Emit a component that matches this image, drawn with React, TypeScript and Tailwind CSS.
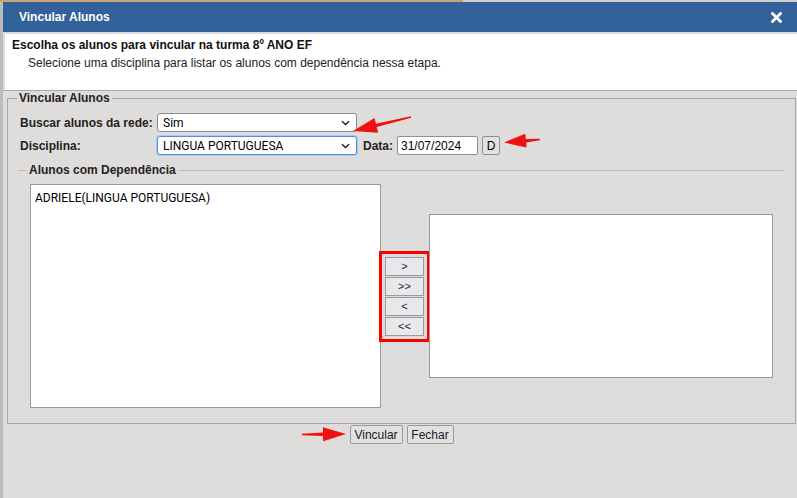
import React from 'react';

const font = { fontFamily: '"Liberation Sans", Arial, sans-serif' };
const roboto = { fontFamily: 'Roboto, "Liberation Sans", sans-serif' };

type Pt = [number, number];

// red annotation arrow: shaft + triangular head, computed from tail/tip
function arrowPoints(tail: Pt, tip: Pt, headLen: number, headW: number, shaftW: number) {
  const dx = tip[0] - tail[0];
  const dy = tip[1] - tail[1];
  const len = Math.hypot(dx, dy);
  const ux = dx / len;
  const uy = dy / len;
  const nx = -uy;
  const ny = ux;
  const bx = tip[0] - ux * headLen;
  const by = tip[1] - uy * headLen;
  const p = (x: number, y: number) => `${x.toFixed(1)},${y.toFixed(1)}`;
  return [
    p(tail[0] + nx * shaftW * 0.45, tail[1] + ny * shaftW * 0.45),
    p(bx + nx * shaftW, by + ny * shaftW),
    p(bx + nx * headW, by + ny * headW),
    p(tip[0], tip[1]),
    p(bx - nx * headW, by - ny * headW),
    p(bx - nx * shaftW, by - ny * shaftW),
    p(tail[0] - nx * shaftW * 0.45, tail[1] - ny * shaftW * 0.45),
  ].join(' ');
}

function Chevron() {
  return (
    <svg width="9" height="6" viewBox="0 0 9 6" className="shrink-0">
      <path d="M1 1.2 L4.5 4.6 L8 1.2" fill="none" stroke="#222" strokeWidth="1.4" />
    </svg>
  );
}

function FakeSelect({ value, focused }: { value: string; focused?: boolean }) {
  return (
    <div
      style={roboto}
      className={`w-[200px] h-[19px] bg-white rounded-[3px] flex items-center justify-between pl-[5px] pr-[6px] text-[12px] font-normal text-black ${
        focused ? 'border border-[#4f8fe0] shadow-[0_0_0_1px_#a9c9f0]' : 'border border-[#8a8a8a]'
      }`}
    >
      <span>{value}</span>
      <Chevron />
    </div>
  );
}

function SmallButton({ label }: { label: string }) {
  return (
    <div className="w-[39px] h-[19px] bg-[#e9e9ed] border border-[#9a9a9a] flex items-center justify-center text-[11px] text-[#222] leading-none">
      {label}
    </div>
  );
}

export default function App() {
  return (
    <div className="relative w-[797px] h-[498px] overflow-hidden flex flex-col bg-[#dfdddc]" style={font}>
      {/* page behind the dialog */}
      <div className="h-[2px] flex shrink-0">
        <div className="w-[463px] bg-[#c9a37a]" />
        <div className="flex-1 bg-[#cfcfcf]" />
      </div>

      <div className="flex flex-1 min-h-0">
        <div className="w-[3px] bg-[#bcbcbc] shrink-0" />

        {/* dialog */}
        <div className="w-[794px] flex flex-col">
          <div className="h-[30px] bg-[#33619a] flex items-center justify-between pl-[16px] pr-[15px]">
            <span className="text-white font-bold text-[12px]">Vincular Alunos</span>
            <svg width="11" height="11" viewBox="0 0 11 11">
              <path d="M1.5 1.5 L9.5 9.5 M9.5 1.5 L1.5 9.5" stroke="#fff" strokeWidth="2.8" strokeLinecap="square" />
            </svg>
          </div>
          <div className="h-[2px] bg-[#dcdcdc]" />

          <div className="h-[56px] bg-white border-l-2 border-[#dcdcdc] pl-[7px] pt-[4px]">
            <p className="text-[12px] leading-[14px] font-bold text-[#111]">Escolha os alunos para vincular na turma 8º ANO EF</p>
            <p className="text-[12px] leading-[14px] text-[#222] mt-[4px] pl-[16px]">
              Selecione uma disciplina para listar os alunos com dependência nessa etapa.
            </p>
          </div>
          <div className="h-[1px] bg-[#a9a9a9]" />

          <div className="flex-1 bg-[#dfdddc] border-l-2 border-[#dcdcdc]">
            <fieldset className="ml-[2px] w-[789px] border border-[#a6a6a6] pl-[12px] pr-[10px] pb-[15px]">
              <legend className="ml-[-3px] px-[2px] text-[12px] leading-[14px] font-bold text-[#222]">Vincular Alunos</legend>

              <div className="pt-[8px] flex flex-col gap-[4px] text-[12px] font-bold text-[#222]">
                <div className="flex items-center">
                  <span className="w-[137px]">Buscar alunos da rede:</span>
                  <FakeSelect value="Sim" />
                </div>
                <div className="flex items-center">
                  <span className="w-[137px]">Disciplina:</span>
                  <FakeSelect value="LINGUA PORTUGUESA" focused />
                  <span className="ml-[6px]">Data:</span>
                  <div className="ml-[4px] w-[81px] h-[19px] bg-white border border-[#8f8f8f] rounded-[2px] flex items-center pl-[3px] font-normal text-black">
                    31/07/2024
                  </div>
                  <div className="ml-[4px] w-[18px] h-[19px] bg-[#e1e1e1] border border-[#8f8f8f] rounded-[2px] flex items-center justify-center font-normal text-black">
                    D
                  </div>
                </div>
              </div>

              <fieldset className="mt-[8px] ml-[-2px] border-t border-[#bdbdbd] pl-[9px]">
                <legend className="px-[2px] text-[12px] leading-[14px] font-bold text-[#222]">Alunos com Dependência</legend>
                <div className="mt-[7px] ml-[3px] flex items-center">
                  <div
                    style={roboto}
                    className="w-[351px] h-[224px] bg-white border border-[#9a9a9a] px-[4px] pt-[4px] text-[12px] text-black"
                  >
                    ADRIELE(LINGUA PORTUGUESA)
                  </div>
                  <div className="-ml-[2px] border-[3px] border-[#ff0000] p-[3px] flex flex-col gap-[1px]">
                    <SmallButton label=">" />
                    <SmallButton label=">>" />
                    <SmallButton label="<" />
                    <SmallButton label="<<" />
                  </div>
                  <div className="-ml-[1px] w-[344px] h-[164px] bg-white border border-[#9a9a9a]" />
                </div>
              </fieldset>
            </fieldset>

            <div className="ml-[2px] w-[789px] mt-[1px] flex justify-center gap-[4px] text-[12px] text-[#1a1a2a]">
              <div className="w-[53px] h-[19px] border border-[#9a9a9a] rounded-[2px] bg-[#e3e1e0] flex items-center justify-center">
                Vincular
              </div>
              <div className="w-[47px] h-[19px] border border-[#9a9a9a] rounded-[2px] bg-[#e3e1e0] flex items-center justify-center">
                Fechar
              </div>
            </div>
          </div>
        </div>
      </div>

      {/* red annotation arrows over the screenshot */}
      <svg className="absolute inset-0 pointer-events-none" width="797" height="498">
        <polygon points={arrowPoints([411, 117], [353, 131], 24, 7.5, 1.7)} fill="#f01010" />
        <polygon points={arrowPoints([540, 139.5], [504, 142.5], 22, 7, 1.7)} fill="#f01010" />
        <polygon points={arrowPoints([302, 434.5], [346, 434], 23, 7, 1.7)} fill="#f01010" />
      </svg>
    </div>
  );
}
